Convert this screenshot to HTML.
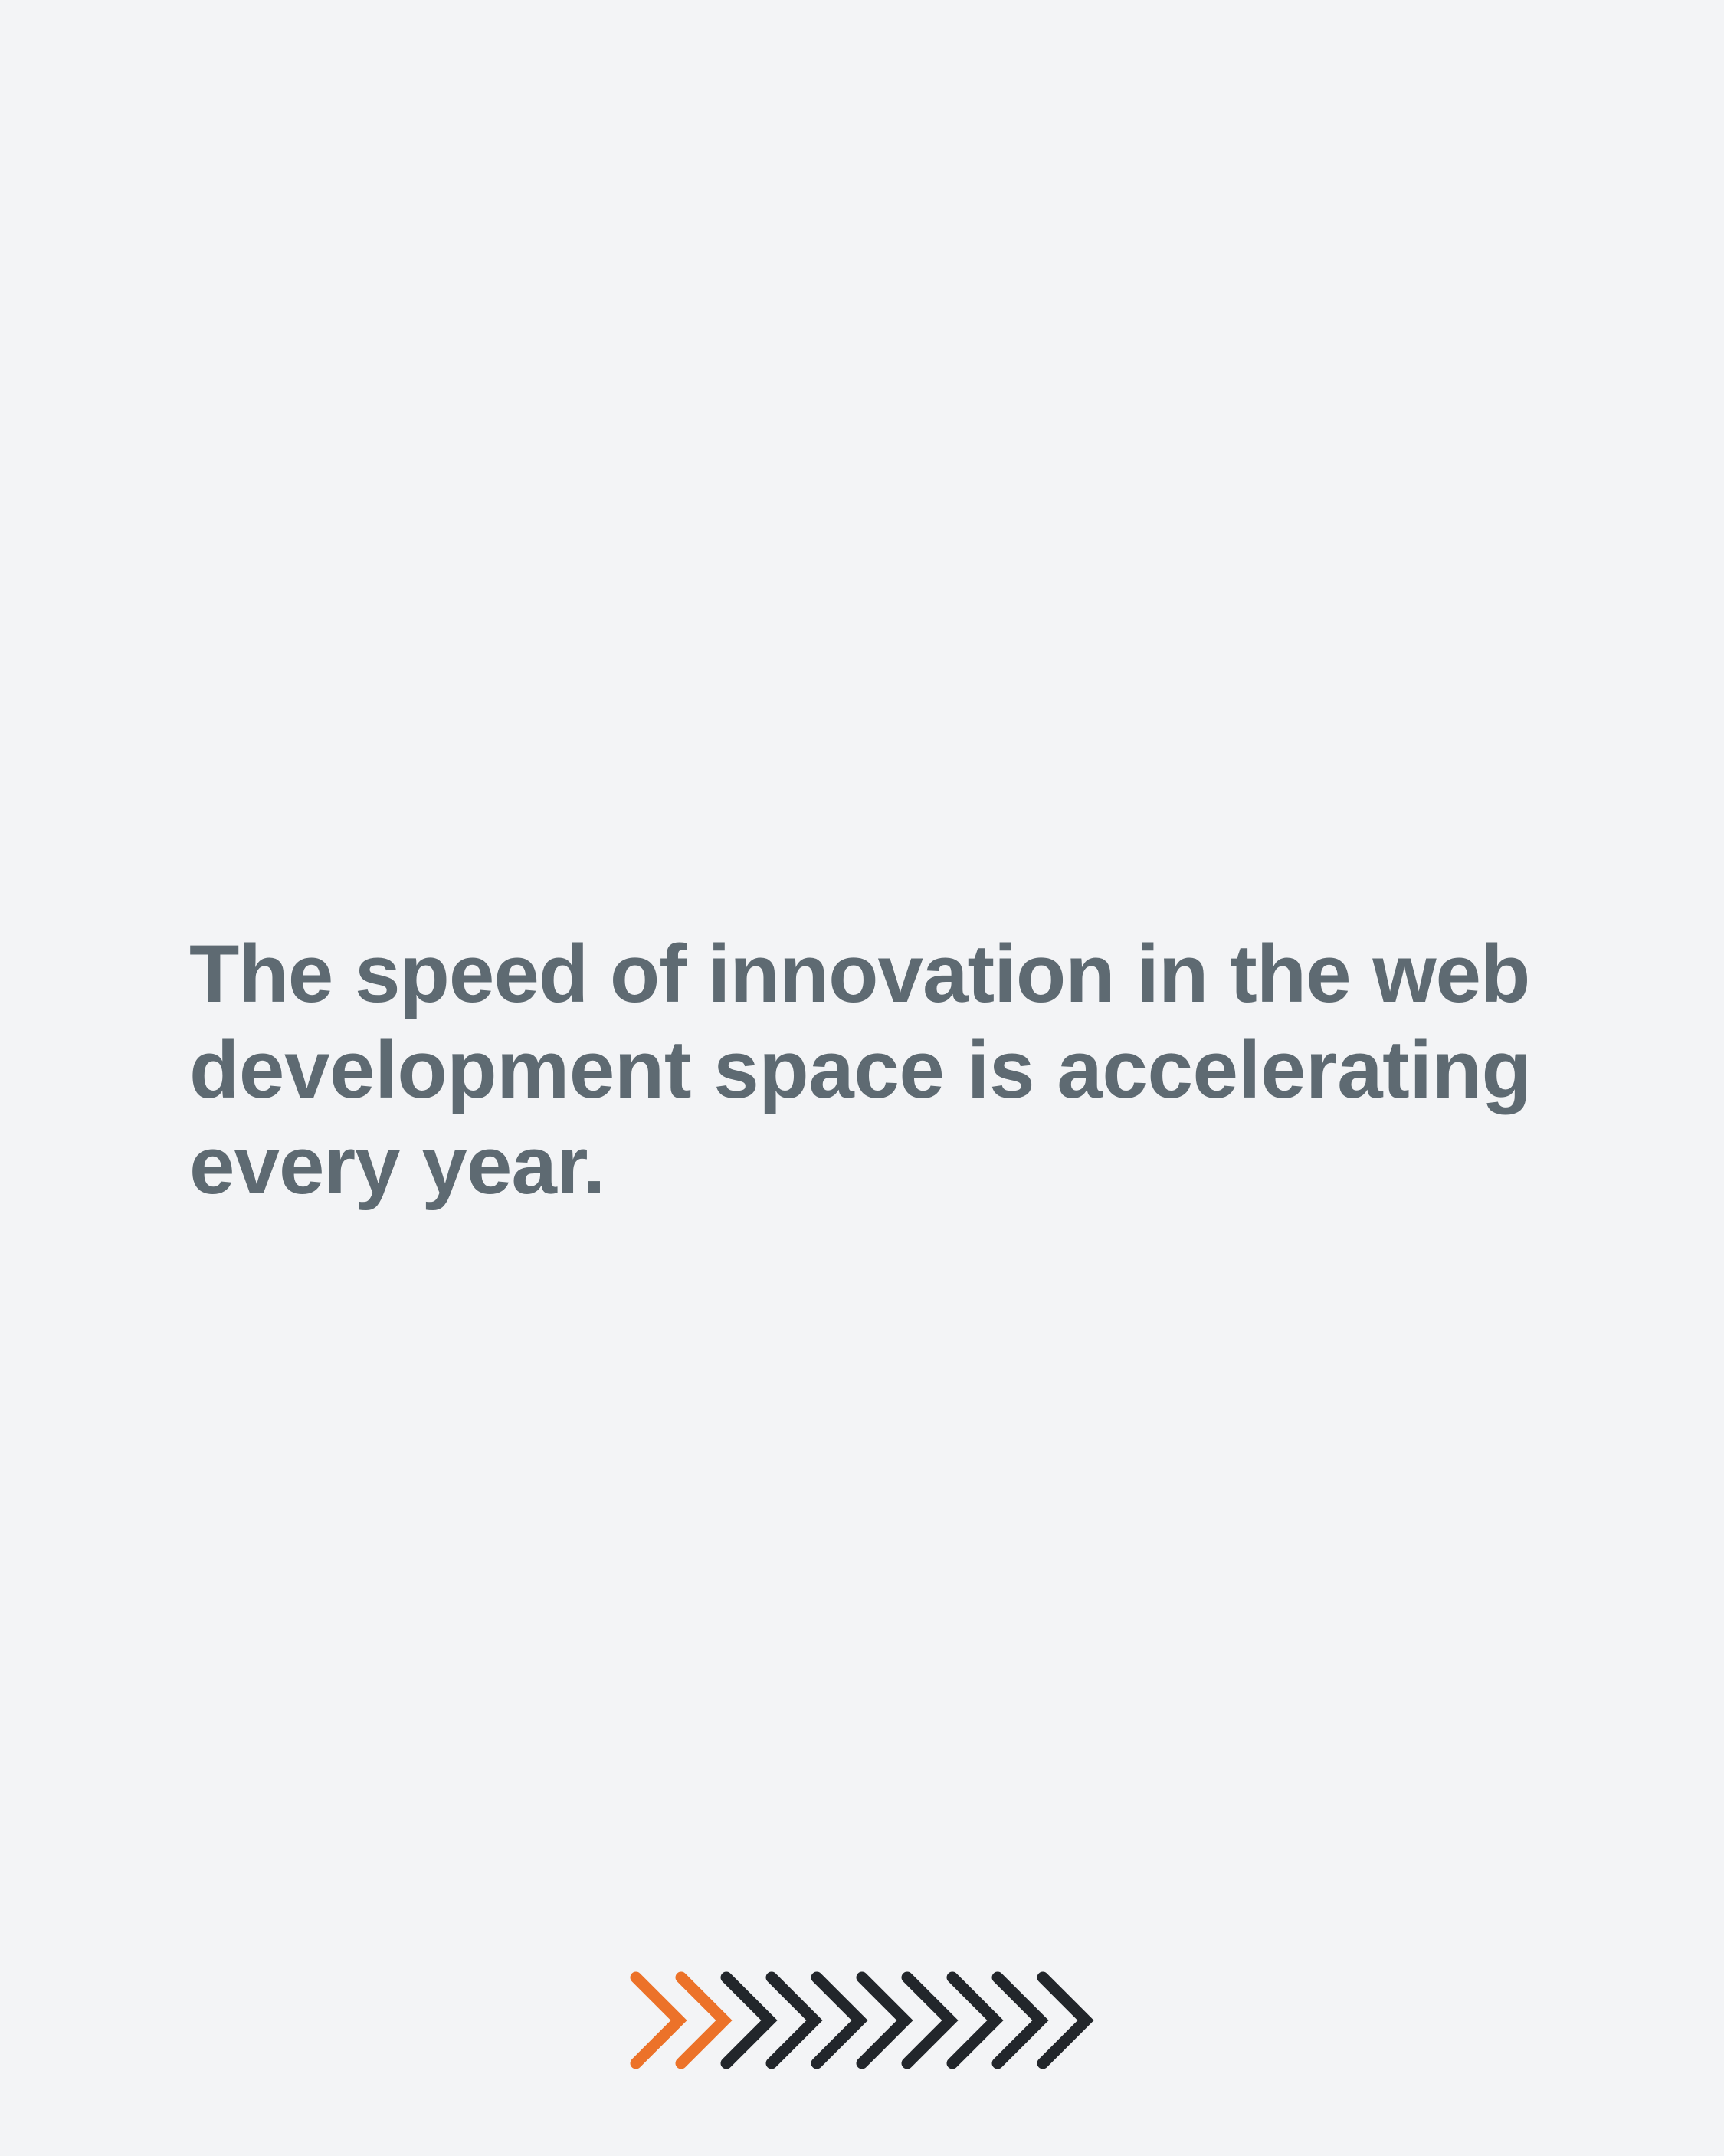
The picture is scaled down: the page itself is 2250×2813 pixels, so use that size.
<!DOCTYPE html>
<html><head><meta charset="utf-8"><style>
html,body{margin:0;padding:0}
body{width:2250px;height:2813px;background:#f3f4f6;position:relative;overflow:hidden}
.t{position:absolute;left:247px;top:1208px;font-family:"Liberation Sans",sans-serif;font-weight:bold;font-size:107px;line-height:125px;color:#5e6a72;letter-spacing:-1px;white-space:nowrap}
.l2{letter-spacing:-0.45px}
svg{position:absolute;left:0;top:0}
</style></head><body>
<div class="t">The speed of innovation in the web<br><span class="l2">development space is accelerating</span><br>every year.</div>
<svg width="2250" height="2813" viewBox="0 0 2250 2813">
<g fill="none" stroke-width="15" stroke-linecap="round" stroke-linejoin="miter">
<polyline stroke="#ec7229" points="830,2580 886,2636 830,2692"/>
<polyline stroke="#ec7229" points="889,2580 945,2636 889,2692"/>
<polyline stroke="#22262b" points="948,2580 1004,2636 948,2692"/>
<polyline stroke="#22262b" points="1007,2580 1063,2636 1007,2692"/>
<polyline stroke="#22262b" points="1066,2580 1122,2636 1066,2692"/>
<polyline stroke="#22262b" points="1125,2580 1181,2636 1125,2692"/>
<polyline stroke="#22262b" points="1184,2580 1240,2636 1184,2692"/>
<polyline stroke="#22262b" points="1243,2580 1299,2636 1243,2692"/>
<polyline stroke="#22262b" points="1302,2580 1358,2636 1302,2692"/>
<polyline stroke="#22262b" points="1361,2580 1417,2636 1361,2692"/>
</g>
</svg>
</body></html>
